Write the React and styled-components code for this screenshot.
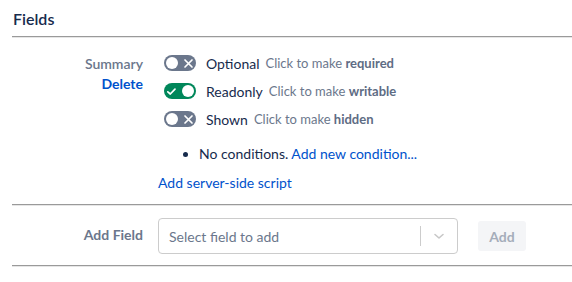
import React from "react"
import styled, { createGlobalStyle } from 'styled-components'

const GlobalStyle = createGlobalStyle`
  body {
    margin: 0;
    background: #fff;
    font-family: Lato, "Noto Sans", sans-serif;
    color: #172b4d;
  }
`

const toggles = [
  { name: 'Optional', hint: 'required', on: false },
  { name: 'Readonly', hint: 'writable', on: true },
  { name: 'Shown', hint: 'hidden', on: false },
]

const Toggle = ({ on }) => (
  <Track $on={on}>
    {on ? (
      <svg width="11" height="11" viewBox="0 0 11 11">
        <path d="M1.8 5.8 L4.3 8 L9 3.2" fill="none" stroke="#fff" strokeWidth="1.7" strokeLinecap="round" strokeLinejoin="round" />
      </svg>
    ) : null}
    <Knob />
    {!on ? (
      <svg width="11" height="11" viewBox="0 0 11 11">
        <path d="M2 2 L9 9 M9 2 L2 9" fill="none" stroke="#fff" strokeWidth="1.7" strokeLinecap="round" />
      </svg>
    ) : null}
  </Track>
)

const App = () => {
  return (
    <Page>
      <GlobalStyle />
      <Heading>Fields</Heading>
      <Rule />

      <FieldRow>
        <Label>
          <span>Summary</span>
          <DeleteLink>Delete</DeleteLink>
        </Label>
        <Content>
          <ToggleList>
            {toggles.map(t => (
              <ToggleRow key={t.name}>
                <Toggle on={t.on} />
                <ToggleName>{t.name}</ToggleName>
                <Hint>Click to make <b>{t.hint}</b></Hint>
              </ToggleRow>
            ))}
          </ToggleList>
          <Conditions>
            <li>No conditions. <Link>Add new condition...</Link></li>
          </Conditions>
          <ScriptLink>Add server-side script</ScriptLink>
        </Content>
      </FieldRow>
      <Rule />

      <AddRow>
        <AddLabel>Add Field</AddLabel>
        <Select>
          <Placeholder>Select field to add</Placeholder>
          <Separator />
          <Chevron>
            <svg width="20" height="20" viewBox="0 0 20 20">
              <path d="M6 8.5 L10 12 L14 8.5" fill="none" stroke="#c7c7c7" strokeWidth="1.6" strokeLinecap="round" strokeLinejoin="round" />
            </svg>
          </Chevron>
        </Select>
        <AddButton>Add</AddButton>
      </AddRow>
      <Rule />
    </Page>
  )
}

export default App

// styles

const Page = styled.div`
  padding: 11px 0 0 12px;
  width: 560px;
`
const Heading = styled.h2`
  margin: 0 0 0 1px;
  font-size: 16px;
  font-weight: 600;
  line-height: 16px;
  color: #172b4d;
`
const Rule = styled.hr`
  margin: 9px 0 0;
  height: 0;
  border: 0;
  border-top: 1px solid #9a9a9a;
  border-bottom: 1px solid #e6e6e6;
`
const FieldRow = styled.div`
  display: grid;
  grid-template-columns: 131px 1fr;
  column-gap: 15px;
  padding-top: 17px;
  padding-bottom: 3px;
`
const Label = styled.div`
  display: flex;
  flex-direction: column;
  align-items: flex-end;
  gap: 2px;
  font-size: 14px;
  line-height: 18px;
  font-weight: 600;
  color: #6b778c;
`
const DeleteLink = styled.span`
  color: #0052cc;
  font-weight: 700;
`
const Content = styled.div`
  display: flex;
  flex-direction: column;
`
const ToggleList = styled.div`
  display: flex;
  flex-direction: column;
  gap: 12px;
  padding-left: 6px;
`
const ToggleRow = styled.div`
  display: flex;
  align-items: center;
  height: 16px;
`
const Track = styled.div`
  box-sizing: border-box;
  width: 32px;
  height: 16px;
  border-radius: 8px;
  padding: 0 2px 0 2px;
  display: flex;
  align-items: center;
  justify-content: space-between;
  background: ${p => (p.$on ? '#00875a' : '#6b778c')};
  flex-shrink: 0;
  svg { display: block; }
`
const Knob = styled.div`
  width: 12px;
  height: 12px;
  border-radius: 50%;
  background: #fff;
`
const ToggleName = styled.span`
  margin-left: 10px;
  font-size: 14px;
  color: #172b4d;
`
const Hint = styled.span`
  margin-left: 6px;
  font-size: 13px;
  color: #6b778c;
  b { font-weight: 700; color: #5e6c84; }
`
const Conditions = styled.ul`
  margin: 18px 0 0;
  padding-left: 41px;
  font-size: 14px;
  line-height: 18px;
  color: #172b4d;
`
const Link = styled.span`
  color: #0052cc;
`
const ScriptLink = styled.span`
  margin-top: 11px;
  font-size: 14px;
  line-height: 18px;
  color: #0052cc;
`
const AddRow = styled.div`
  display: flex;
  align-items: center;
  padding: 12px 0 2px;
`
const AddLabel = styled.div`
  width: 131px;
  margin-right: 15px;
  margin-top: -4px;
  text-align: right;
  font-size: 14px;
  font-weight: 700;
  color: #6b778c;
`
const Select = styled.div`
  box-sizing: border-box;
  width: 300px;
  height: 36px;
  border: 1px solid #cccccc;
  border-radius: 4px;
  display: flex;
  align-items: center;
  padding-left: 10px;
`
const Placeholder = styled.span`
  flex: 1;
  font-size: 14px;
  color: #6b778c;
`
const Separator = styled.span`
  width: 1px;
  height: 20px;
  background: #cccccc;
`
const Chevron = styled.span`
  display: flex;
  padding: 0 8px;
`
const AddButton = styled.button`
  margin-left: 20px;
  width: 48px;
  height: 30px;
  border: 0;
  border-radius: 3px;
  background: #f4f5f7;
  color: #a5adba;
  font-family: inherit;
  font-size: 14px;
  font-weight: 700;
`
